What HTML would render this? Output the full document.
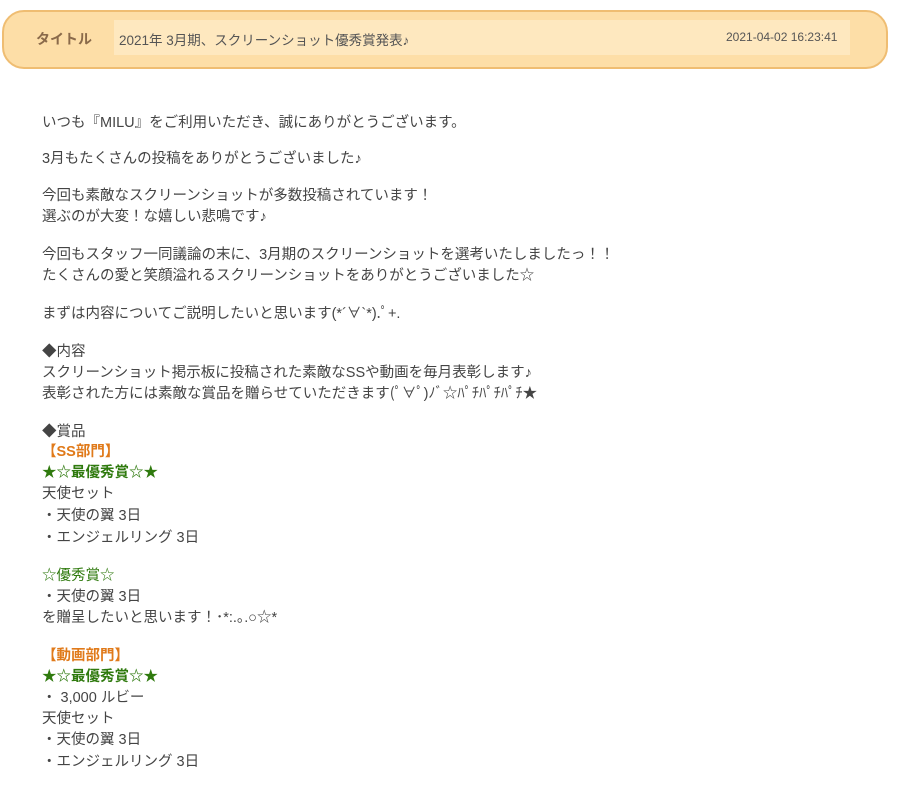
<!DOCTYPE html>
<html><head><meta charset="utf-8"><style>
body{margin:0;width:897px;height:785px;background:#fff;font-family:"Liberation Sans","Noto Sans CJK JP",sans-serif;color:#444;position:relative;overflow:hidden}
.bar{position:absolute;left:2px;top:10px;width:882px;height:55px;border:2px solid #efbd72;border-radius:22px;background:#fddea7}
.lab{position:absolute;left:36px;top:29px;font-size:14px;font-weight:bold;color:#8a6a4a}
.field{position:absolute;left:114px;top:20px;width:736px;height:35px;background:#fee8bf}
.tt{position:absolute;left:119px;top:29px;font-size:13.5px;color:#555}
.dt{position:absolute;left:726px;top:30px;font-size:12px;color:#555}
.l{position:absolute;left:42px;font-size:14.5px;line-height:18px;white-space:nowrap}
.o{color:#e07a1a;font-weight:bold}
.g{color:#2f7a0e;font-weight:bold}
.gn{color:#2f7a0e}
</style></head><body>
<div class="bar"></div>
<div class="field"></div>
<div class="lab">タイトル</div>
<div class="tt">2021年 3月期、スクリーンショット優秀賞発表♪</div>
<div class="dt">2021-04-02 16:23:41</div>
<div class="l" style="top:114px">いつも『MILU』をご利用いただき、誠にありがとうございます。</div>
<div class="l" style="top:150px">3月もたくさんの投稿をありがとうございました♪</div>
<div class="l" style="top:187px">今回も素敵なスクリーンショットが多数投稿されています！</div>
<div class="l" style="top:208px">選ぶのが大変！な嬉しい悲鳴です♪</div>
<div class="l" style="top:246px">今回もスタッフ一同議論の末に、3月期のスクリーンショットを選考いたしましたっ！！</div>
<div class="l" style="top:267px">たくさんの愛と笑顔溢れるスクリーンショットをありがとうございました☆</div>
<div class="l" style="top:305px">まずは内容についてご説明したいと思います(*´∀`*).ﾟ+.</div>
<div class="l" style="top:343px">◆内容</div>
<div class="l" style="top:364px">スクリーンショット掲示板に投稿された素敵なSSや動画を毎月表彰します♪</div>
<div class="l" style="top:385px">表彰された方には素敵な賞品を贈らせていただきます(ﾟ∀ﾟ)ﾉﾞ☆ﾊﾟﾁﾊﾟﾁﾊﾟﾁ★</div>
<div class="l" style="top:423px">◆賞品</div>
<div class="l o" style="top:443px">【SS部門】</div>
<div class="l g" style="top:464px">★☆最優秀賞☆★</div>
<div class="l" style="top:485px">天使セット</div>
<div class="l" style="top:507px">・天使の翼 3日</div>
<div class="l" style="top:529px">・エンジェルリング 3日</div>
<div class="l gn" style="top:567px">☆優秀賞☆</div>
<div class="l" style="top:588px">・天使の翼 3日</div>
<div class="l" style="top:609px">を贈呈したいと思います！･*:.｡.○☆*</div>
<div class="l o" style="top:647px">【動画部門】</div>
<div class="l g" style="top:668px">★☆最優秀賞☆★</div>
<div class="l" style="top:689px">・ 3,000 ルビー</div>
<div class="l" style="top:710px">天使セット</div>
<div class="l" style="top:731px">・天使の翼 3日</div>
<div class="l" style="top:753px">・エンジェルリング 3日</div>
</body></html>
